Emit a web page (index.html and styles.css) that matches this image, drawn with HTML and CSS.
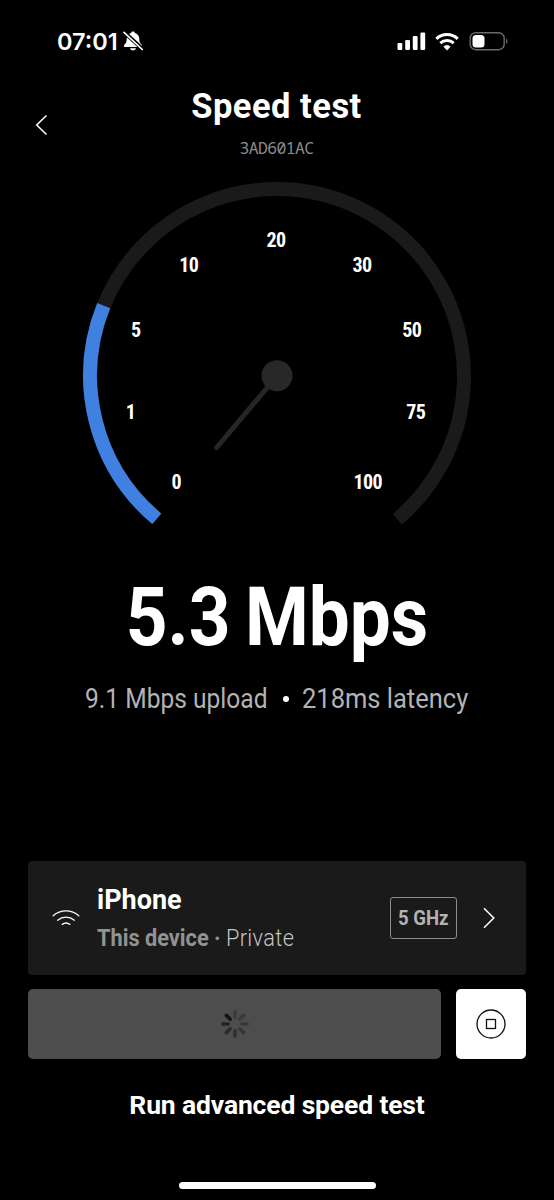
FILE: index.html
```html
<!DOCTYPE html>
<html lang="en">
<head>
<meta charset="utf-8">
<title>Speed test</title>
<link rel="stylesheet" href="styles.css">
</head>
<body>
<div class="screen">
  <div class="status">
    <span class="time">07:01</span>
    <svg class="bell" width="22" height="22" viewBox="0 0 22 22">
      <path fill="#fff" d="M11 1.600c-.9 0-1.600.5-1.900 1.300C6.400 3.700 4.700 5.900 4.700 8.700c0 3-.7 4.200-1.900 5.500-.6.6-.9 1.100-.9 1.700 0 .7.5 1.100 1.300 1.100h15.600c.8 0 1.300-.4 1.300-1.100 0-.6-.3-1.100-.9-1.700-1.200-1.300-1.900-2.500-1.900-5.500 0-2.800-1.700-5-4.400-5.800-.3-.8-1-1.300-1.900-1.300zM8 18.200c.3 1.300 1.500 2.200 3 2.200s2.700-.9 3-2.200z"/>
      <path stroke="#000" stroke-width="4" d="M1.500 1.500 21 19.500"/>
      <path stroke="#fff" stroke-width="1.700" stroke-linecap="round" d="M2 2.300 20.300 19.500"/>
    </svg>
    <svg class="indicators" width="114" height="24" viewBox="0 0 114 24">
      <g fill="#fff">
        <rect x="1.500" y="14" width="4.800" height="7" rx="1.200"/>
        <rect x="9.200" y="11" width="4.800" height="10" rx="1.200"/>
        <rect x="16.800" y="7" width="4.800" height="14" rx="1.200"/>
        <rect x="24.400" y="3.500" width="4.800" height="17.500" rx="1.200"/>
        <path d="M51 21.200 47.700 17.700a4.800 4.800 0 0 1 6.600 0z" stroke="#fff" stroke-width=".5" stroke-linejoin="round"/>
      </g>
      <g fill="none" stroke="#fff" stroke-width="3">
        <path d="M40.300 9.800a15.600 15.600 0 0 1 21.400 0"/>
        <path d="M44.300 14.200a9.800 9.800 0 0 1 13.400 0"/>
      </g>
      <rect x="74.200" y="3.700" width="34" height="17" rx="5.500" fill="none" stroke="#6a6a6a" stroke-width="1.400"/>
      <rect x="76.500" y="6" width="12" height="12.500" rx="3.500" fill="#fff"/>
      <path d="M110 9.500c1.800.6 1.800 4.900 0 5.500z" fill="#6a6a6a"/>
    </svg>
  </div>

  <header class="header">
    <svg class="back" width="14" height="24" viewBox="0 0 14 24"><path d="M12.500 2.500 2.700 12l9.800 9.500" fill="none" stroke="#fff" stroke-width="1.500"/></svg>
    <div class="heading">
      <h1 class="title">Speed test</h1>
      <div class="serial">3AD601AC</div>
    </div>
  </header>

  <svg class="gauge" width="394" height="350" viewBox="80 178 394 350">
    <g fill="none" stroke-width="14">
      <path d="M156.800 519.250A187 187 0 1 1 397.200 519.250" stroke="#1a1a1a"/>
      <path d="M156.800 518.750A187 187 0 0 1 103.700 305.700" stroke="#3f80e0"/>
      <path d="M277 376 216.700 447.500" stroke="#262626" stroke-width="5" stroke-linecap="round"/>
    </g>
    <circle cx="277" cy="375.700" r="15.500" fill="#282828"/>
    <g class="ticks">
      <text x="176.200" y="488.500">0</text>
      <text x="130.400" y="419.200">1</text>
      <text x="135.700" y="337.200">5</text>
      <text x="188.700" y="272">10</text>
      <text x="275.900" y="247.300">20</text>
      <text x="362" y="272">30</text>
      <text x="411.700" y="337.200">50</text>
      <text x="415.700" y="419.200">75</text>
      <text x="367.700" y="488.500">100</text>
    </g>
  </svg>

  <div class="speed">5.3 Mbps</div>
  <div class="details"><span class="upload">9.1 Mbps upload</span><i class="dot"></i><span class="latency">218ms latency</span></div>

  <div class="device">
    <svg class="wifi" width="30" height="20" viewBox="0 0 30 20">
      <g fill="none" stroke="#fff" stroke-width="1.300" stroke-linecap="round">
        <path d="M2.200 7.700a19.500 19.500 0 0 1 25.600 0"/>
        <path d="M6.700 12.200a13 13 0 0 1 16.600 0"/>
        <path d="M11.200 16.400a6.500 6.500 0 0 1 7.600 0"/>
      </g>
    </svg>
    <div class="info">
      <div class="name">iPhone</div>
      <div class="meta"><b>This device ·</b> <span>Private</span></div>
    </div>
    <div class="band"><span>5 GHz</span></div>
    <svg class="next" width="14" height="24" viewBox="0 0 14 24"><path d="M2 2.300 11.800 12 2 21.700" fill="none" stroke="#fff" stroke-width="1.500"/></svg>
  </div>

  <div class="actions">
    <div class="run">
      <svg width="30" height="30" viewBox="-15 -15 30 30">
        <g stroke-width="3.600" stroke-linecap="round">
          <path d="M0-6.800V-12.200" stroke="#3c3c3c"/>
          <path d="M0-6.800V-12.200" stroke="#3b3b3b" transform="rotate(45)"/>
          <path d="M0-6.800V-12.200" stroke="#393939" transform="rotate(90)"/>
          <path d="M0-6.800V-12.200" stroke="#363636" transform="rotate(135)"/>
          <path d="M0-6.800V-12.200" stroke="#323232" transform="rotate(180)"/>
          <path d="M0-6.800V-12.200" stroke="#2b2b2b" transform="rotate(225)"/>
          <path d="M0-6.800V-12.200" stroke="#222" transform="rotate(270)"/>
          <path d="M0-6.800V-12.200" stroke="#141414" transform="rotate(315)"/>
        </g>
      </svg>
    </div>
    <div class="stop">
      <svg width="32" height="32" viewBox="0 0 32 32"><g fill="none" stroke="#111" stroke-width="1.300"><circle cx="16" cy="16" r="14"/><rect x="11.500" y="11.500" width="9" height="9"/></g></svg>
    </div>
  </div>

  <div class="advanced">Run advanced speed test</div>
  <div class="home"></div>
</div>
</body>
</html>
```

FILE: styles.css
```css
body {
  margin: 0;
  background: #000;
}

.screen {
  width: 554px;
  height: 1200px;
  box-sizing: border-box;
  overflow: hidden;
  display: flex;
  flex-direction: column;
  background: #000;
  color: #fff;
  font-family: Roboto, sans-serif;
  white-space: nowrap;
}

.status {
  display: flex;
  align-items: center;
  height: 82px;
  padding: 0 44px 0 57px;
}

.time {
  width: 65px;
  font: 600 23.5px/28px Inter, sans-serif;
  padding-top: 1px;
}

.indicators {
  margin: 0 0 0 auto;
}

.header {
  display: flex;
  height: 96px;
  padding-left: 34px;
}

.back {
  margin-top: 31px;
}

.heading {
  flex: 1;
  padding-right: 49px;
  text-align: center;
}

.title {
  margin: 4px 0 0;
  font-size: 34.5px;
  line-height: 40px;
  font-weight: 700;
  letter-spacing: 0.5px;
}

.serial {
  margin-top: 11px;
  font: 16.4px/22px "Noto Sans Mono", "DejaVu Sans Mono", monospace;
  letter-spacing: -0.6px;
  color: #8c8c8c;
}

.gauge {
  margin-left: 80px;
}

.ticks {
  fill: #fff;
  font-size: 20px;
  font-weight: 700;
  font-stretch: 75%;
  letter-spacing: -0.7px;
  text-anchor: middle;
}

.speed {
  margin-top: 50px;
  height: 80px;
  text-align: center;
  font-size: 81px;
  line-height: 80px;
  font-weight: 700;
  word-spacing: -4px;
  transform: scaleX(0.9);
}

.details {
  display: flex;
  align-items: center;
  margin-top: 25px;
  height: 32px;
  padding-left: 85px;
  color: #b3b3b3;
  font-size: 27px;
  line-height: 32px;
}

.upload {
  width: 198px;
  transform: scaleX(0.91);
  transform-origin: left;
}

.dot {
  width: 6px;
  height: 6px;
  margin-right: 13px;
  border-radius: 50%;
  background: #fff;
}

.latency {
  transform: scaleX(0.944);
  transform-origin: left;
}

.device {
  display: flex;
  align-items: center;
  height: 114px;
  margin: 146px 28.5px 0 28px;
  padding: 0 30px 0 23px;
  box-sizing: border-box;
  border-radius: 4px;
  background: #1a1a1a;
}

.info {
  flex: 1;
  padding-left: 16px;
}

.name {
  height: 39px;
  font-size: 27px;
  line-height: 38px;
  font-weight: 700;
}

.meta {
  height: 36px;
  font-size: 23px;
  line-height: 37px;
  font-weight: 300;
  color: #c4c4c4;
  transform: scaleX(0.945);
  transform-origin: left;
}

.meta b {
  font-weight: 700;
  color: #929292;
}

.meta span {
  letter-spacing: 0.4px;
}

.band {
  width: 67px;
  height: 42px;
  box-sizing: border-box;
  margin-right: 25px;
  border: 1.5px solid #8c8c8c;
  border-radius: 3px;
  text-align: center;
  color: #b3b3b3;
  font-size: 20px;
  line-height: 40px;
  font-weight: 700;
}

.band span {
  display: inline-block;
  margin: 0 -5px;
  transform: scaleX(0.93);
}

.actions {
  display: flex;
  gap: 14.5px;
  height: 70px;
  margin: 14px 28.5px 0 28px;
}

.run,
.stop {
  display: flex;
  align-items: center;
  justify-content: center;
  border-radius: 5px;
}

.run {
  flex: 1;
  background: #4d4d4d;
}

.stop {
  width: 70px;
  background: #fff;
}

.advanced {
  margin-top: 30px;
  text-align: center;
  font-size: 26.5px;
  line-height: 32px;
  font-weight: 700;
  letter-spacing: -0.15px;
}

.home {
  width: 197px;
  height: 7px;
  margin: 60.5px auto 0;
  border-radius: 4px;
  background: #fff;
}
```
